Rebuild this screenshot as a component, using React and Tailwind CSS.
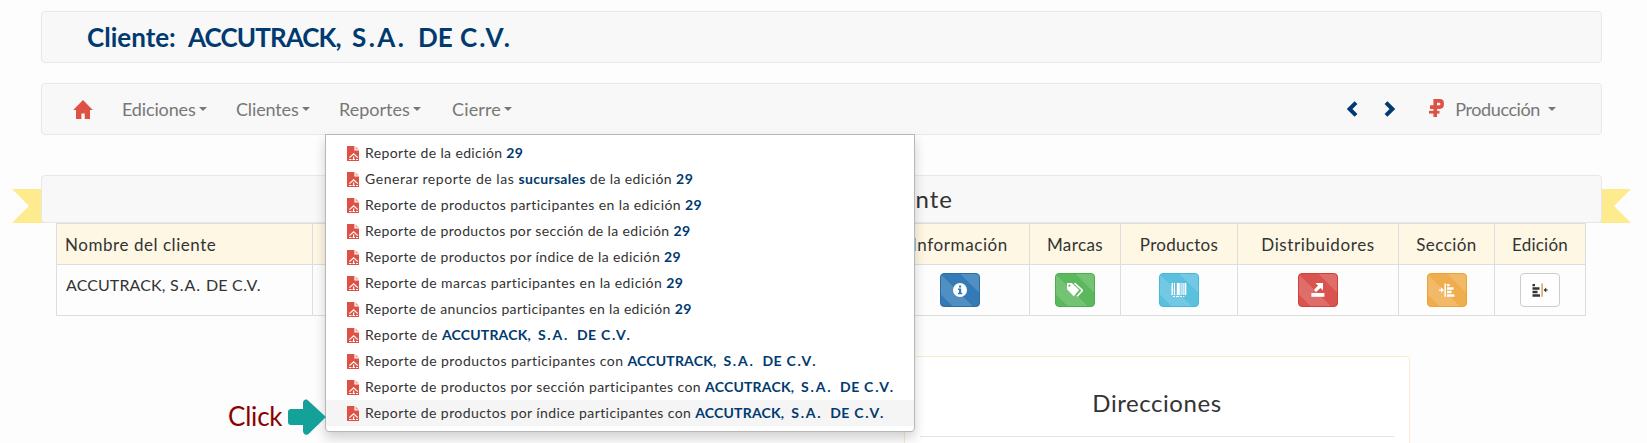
const reports = [
  { text: "Reporte de la edición ", bold: "29", track: "tracking-[0.37px]" },
  {
    text: "Generar reporte de las ",
    mid: "sucursales",
    after: " de la edición ",
    bold: "29",
    track: "tracking-[0.55px]",
  },
  { text: "Reporte de productos participantes en la edición ", bold: "29", track: "tracking-[0.4px]" },
  { text: "Reporte de productos por sección de la edición ", bold: "29", track: "tracking-[0.37px]" },
  { text: "Reporte de productos por índice de la edición ", bold: "29", track: "tracking-[0.38px]" },
  { text: "Reporte de marcas participantes en la edición ", bold: "29", track: "tracking-[0.43px]" },
  { text: "Reporte de anuncios participantes en la edición ", bold: "29", track: "tracking-[0.35px]" },
  { text: "Reporte de ", client: true, track: "tracking-[0.5px]" },
  { text: "Reporte de productos participantes con ", client: true, track: "tracking-[0.43px]" },
  { text: "Reporte de productos por sección participantes con ", client: true, track: "tracking-[0.41px]" },
  { text: "Reporte de productos por índice participantes con ", client: true, track: "tracking-[0.41px]", active: true },
];

const nameSizes = {
  heading: [
    "inline-block w-[164px] tracking-[-0.9px]",
    "inline-block w-[66px] tracking-[2.4px]",
    "inline-block w-[42px]",
    "tracking-[2px]",
  ],
  menu: [
    "inline-block w-24 tracking-[0.2px]",
    "inline-block w-[39px] tracking-[1.8px]",
    "inline-block w-6",
    "tracking-[1.8px]",
  ],
  cell: [
    "inline-block w-[104px] tracking-[0.1px]",
    "inline-block w-9 tracking-[1px]",
    "inline-block w-[26px]",
    "tracking-[0.6px]",
  ],
};

function ClientName({ size }) {
  const [name, sa, de, cv] = nameSizes[size];
  return (
    <span className="whitespace-pre">
      <span className={name}>ACCUTRACK, </span>
      <span className={sa}>S.A. </span>
      <span className={de}>DE </span>
      <span className={cv}>C.V.</span>
    </span>
  );
}

function Caret({ className = "" }) {
  return (
    <svg viewBox="0 0 8 4" className={`inline-block h-1 w-2 fill-[#777] ${className}`}>
      <path d="M0 0h8L4 4z" />
    </svg>
  );
}

function FileIcon() {
  return (
    <svg viewBox="0 0 12 15" className="h-[15px] w-3 shrink-0">
      <path d="M0 0h7.4v4.600H12V15H0z" fill="#de5246" />
      <path d="M8.500 .3L11.800 3.600H8.500z" fill="#ee9f98" />
      <path d="M2.400 11.600L6.600 7.800l4.200 3.800M6.600 10.500v2.800" fill="none" stroke="#fff" strokeWidth="1.200" />
      <path d="M2 13.500h9" stroke="#fff" strokeWidth="1" strokeDasharray="2.500 1" />
    </svg>
  );
}

function HomeIcon() {
  return (
    <svg viewBox="0 0 20 19" className="h-[19px] w-5 fill-[#de5246]">
      <path d="M10 0l9.800 10H17v9h-5.200v-5.400H8.400V19H3v-9H.2z" />
    </svg>
  );
}

function RubleIcon() {
  return (
    <svg viewBox="0 0 15 18" className="h-[18px] w-[15px]" fill="none" stroke="#de5246">
      <path d="M6.200 18V1.900h4.600q2.300 0 2.300 2.300v1.600q0 2.300-2.300 2.300H1" strokeWidth="3.600" />
      <path d="M0 13.200h10.500" strokeWidth="2.800" />
    </svg>
  );
}

function Chevron({ right }) {
  return (
    <svg viewBox="0 0 12 16" className="h-4 w-3" fill="none" stroke="#003a70" strokeWidth="4">
      <path d={right ? "M2 1.6L8.4 8L2 14.4" : "M10 1.6L3.6 8L10 14.4"} />
    </svg>
  );
}

const glyphs = {
  info: (
    <>
      <circle cx="8" cy="8" r="7" fill="#fff" />
      <path d="M7 3.6h2.2v1.8H7zM6 6.6h3.2v4.2h1v1.4H6v-1.4h1V8H6z" fill="#337ab7" />
    </>
  ),
  tags: (
    <>
      <path d="M-.5 1h5.400l7.300 7-5.500 6.300L-.5 6.800z" fill="#fff" />
      <circle cx="2.400" cy="3.600" r="1.100" fill="#5cb85c" />
      <path d="M7.500 1.200l8 7.100-5.300 6" fill="none" stroke="#fff" strokeWidth="1.600" />
    </>
  ),
  barcode: (
    <g fill="#fff">
      <path d="M.5 1h1.600v12H.5zM3 1h1v12H3zM5.800 1h3v12h-3zM9.600 1h1v12h-1zM11.500 1h1.200v12h-1.200zM13.500 1h1.800v12h-1.800z" />
      <path d="M2 14h2v1H2zM5 14h3v1H5zM9 14h2v1H9zM12 14h1.400v1H12z" />
    </g>
  ),
  open: (
    <g fill="#fff">
      <path d="M1.400 11h13v3.800h-13z" />
      <path d="M5.400 1H13v7.600l-2.600-2.600L6.200 10 4 7.800 8 3.600z" />
    </g>
  ),
  right: (
    <g fill="#fff">
      <path d="M5.400 1.500h1.600v13.300H5.400z" />
      <path d="M8 2h2.600v2.200H8zM8 5.200h6.600v2.600H8zM8 8.800h4.600v2.400H8zM8 12.200h7.400v2.600H8z" />
      <path d="M0 7.400h2V5.200L5 8 2 10.800V8.700H0z" />
    </g>
  ),
  left: (
    <g fill="#333">
      <path d="M.5 2H3v2.200H.5zM.5 5.200h7v2.600h-7zM.5 8.800h5v2.400h-5zM.5 12.200H8v2.600H.5z" />
      <path d="M9.400 1.500h1.400v13.300H9.400z" fill="#d79a4e" />
      <path d="M15.800 7.500h-1.600V5.600L11.600 8l2.600 2.400V8.600h1.600z" />
    </g>
  ),
};

const stripes =
  "bg-[linear-gradient(45deg,transparent_25%,rgba(255,255,255,.15)_25%,rgba(255,255,255,.15)_50%,transparent_50%,transparent_75%,rgba(255,255,255,.15)_75%)] bg-[length:40px_40px]";

const columns = [
  { label: "Información", track: "tracking-[0.6px]", icon: "info", width: "w-[139px]", color: "bg-[#337ab7] border-[#2e6da4]" },
  { label: "Marcas", track: "tracking-[0.4px]", icon: "tags", width: "w-[91px]", color: "bg-[#5cb85c] border-[#4cae4c]" },
  { label: "Productos", track: "tracking-[0.3px]", icon: "barcode", width: "w-[117px]", color: "bg-[#5bc0de] border-[#46b8da]" },
  { label: "Distribuidores", track: "tracking-[0.6px]", icon: "open", width: "w-[161px]", color: "bg-[#d9534f] border-[#d43f3a]" },
  { label: "Sección", track: "tracking-[0.45px]", icon: "right", width: "w-24", color: "bg-[#f0ad4e] border-[#eea236]" },
  { label: "Edición", track: "tracking-[0.25px]", icon: "left", width: "w-[91px]", color: "bg-white border-[#ccc]" },
];

function ReportMenu() {
  return (
    <ul className="absolute top-[50px] left-0 z-10 w-[590px] rounded-b border border-[#b5b7b8] bg-white py-[5px] text-[14px] leading-[26px] text-[#333] shadow-[0_6px_12px_rgba(0,0,0,.175)]">
      {reports.map((r) => (
        <li
          key={r.text}
          className={`flex h-[26px] items-center gap-[6px] pl-[21px] whitespace-pre ${r.active ? "bg-[#f5f5f5]" : ""}`}
        >
          <FileIcon />
          <span className={r.track}>
            {r.text}
            {r.mid && <b className="tracking-[0.3px] text-[#003a70]">{r.mid}</b>}
            {r.after && <span className="tracking-[0.4px]">{r.after}</span>}
            {r.client ? (
              <b className="text-[#003a70]">
                <ClientName size="menu" />
              </b>
            ) : (
              <b className="text-[#003a70]">{r.bold}</b>
            )}
          </span>
        </li>
      ))}
    </ul>
  );
}

function Navbar() {
  return (
    <nav className="mt-5 flex h-[52px] items-center rounded border border-[#e7e7e7] bg-[#f8f8f8] text-[18px] text-[#777]">
      <ul className="flex h-full flex-1 leading-[50px]">
        <li className="flex w-[66px] items-center pl-[31px]">
          <HomeIcon />
        </li>
        <li className="flex w-[114px] items-center gap-[3px] pl-[14px] tracking-[-0.15px]">
          Ediciones <Caret />
        </li>
        <li className="flex w-[103px] items-center gap-[3px] pl-[14px] tracking-[-0.15px]">
          Clientes <Caret />
        </li>
        <li className="relative flex w-28 items-center gap-[3px] pl-[14px]">
          Reportes <Caret />
          <ReportMenu />
        </li>
        <li className="flex items-center gap-[3px] pl-[15px] tracking-[0.15px]">
          Cierre <Caret />
        </li>
      </ul>
      <div className="flex items-center pr-[45px]">
        <Chevron />
        <span className="ml-[26px] flex">
          <Chevron right />
        </span>
        <span className="mr-[11px] ml-[33px] -mt-[3px] flex">
          <RubleIcon />
        </span>
        <span className="tracking-[-0.4px]">Producción</span>
        <Caret className="ml-2" />
      </div>
    </nav>
  );
}

function Banner() {
  return (
    <div className="relative mt-10 h-12">
      <svg viewBox="0 0 33 34" className="absolute top-[14px] -left-[29px] h-[34px] w-[33px] fill-[#fdeb8e]">
        <path d="M0 0h33v34H0l17-17z" />
      </svg>
      <svg viewBox="0 0 33 34" className="absolute top-[14px] -right-[29px] h-[34px] w-[33px] fill-[#fdeb8e]">
        <path d="M33 0H0v34h33L16 17z" />
      </svg>
      <h2 className="relative h-full rounded border border-[#e7e7e7] bg-[#f8f8f8] pr-[648px] text-right text-[24px] leading-[46px] tracking-[1px] text-[#333]">
        cliente
      </h2>
    </div>
  );
}

function ClientTable() {
  return (
    <table className="ml-[15px] w-[1530px] table-fixed border-collapse text-[#333] [&_td]:border [&_td]:border-[#ddd] [&_th]:border [&_th]:border-[#ddd]">
      <thead>
        <tr className="h-[41px] bg-[#fdf7e3] text-[17px] [&_th]:pt-0.5 [&_th]:font-normal">
          <th className="w-64 pl-2 text-left tracking-[0.55px]">Nombre del cliente</th>
          <th />
          {columns.map((c) => (
            <th key={c.label} className={`${c.width} ${c.track}`}>
              {c.label}
            </th>
          ))}
        </tr>
      </thead>
      <tbody>
        <tr className="h-[51px]">
          <td className="pt-2 pl-[9px] align-top text-[16px]">
            <ClientName size="cell" />
          </td>
          <td />
          {columns.map((c) => (
            <td key={c.label}>
              <div
                className={`mx-auto flex h-[34px] w-10 items-center justify-center rounded border ${c.color} ${stripes}`}
              >
                <svg viewBox="0 0 16 16" className="-mt-px h-4 w-4">
                  {glyphs[c.icon]}
                </svg>
              </div>
            </td>
          ))}
        </tr>
      </tbody>
    </table>
  );
}

export default function App() {
  return (
    <div className="relative h-[443px] w-[1647px] overflow-hidden bg-[#fdfdfd] pt-[11px] pr-[45px] pl-[41px] font-[Lato,sans-serif]">
      <header className="flex h-[52px] items-center rounded border border-[#e7e7e7] bg-[#f8f8f8] pl-[45px]">
        <h1 className="text-[26px] font-bold whitespace-pre text-[#003a70]">
          <span className="inline-block w-[101px]">Cliente: </span>
          <ClientName size="heading" />
        </h1>
      </header>
      <Navbar />
      <Banner />
      <ClientTable />
      <section className="mt-10 ml-[863px] h-[120px] w-[506px] rounded border border-[#faebcc] bg-white px-[15px] pt-[28px]">
        <h3 className="border-b border-[#e3e3e3] pb-[15px] text-center text-[24px] leading-9 tracking-[0.55px] text-[#333]">
          Direcciones
        </h3>
      </section>
      <div className="absolute top-[398px] left-[228px] z-20 flex h-[37px] items-center">
        <span className="w-[60px] text-[26px] leading-[37px] tracking-[-0.2px] text-[#8b0000]">Click</span>
        <svg viewBox="0 0 38 36" className="h-9 w-[38px] fill-[#14a19a]">
          <path d="M3 10h12V4q0-4 4-3.500L38 18 20 35.500q-5 1-5-4V26H3q-3 0-3-3V13q0-3 3-3z" />
        </svg>
      </div>
    </div>
  );
}
